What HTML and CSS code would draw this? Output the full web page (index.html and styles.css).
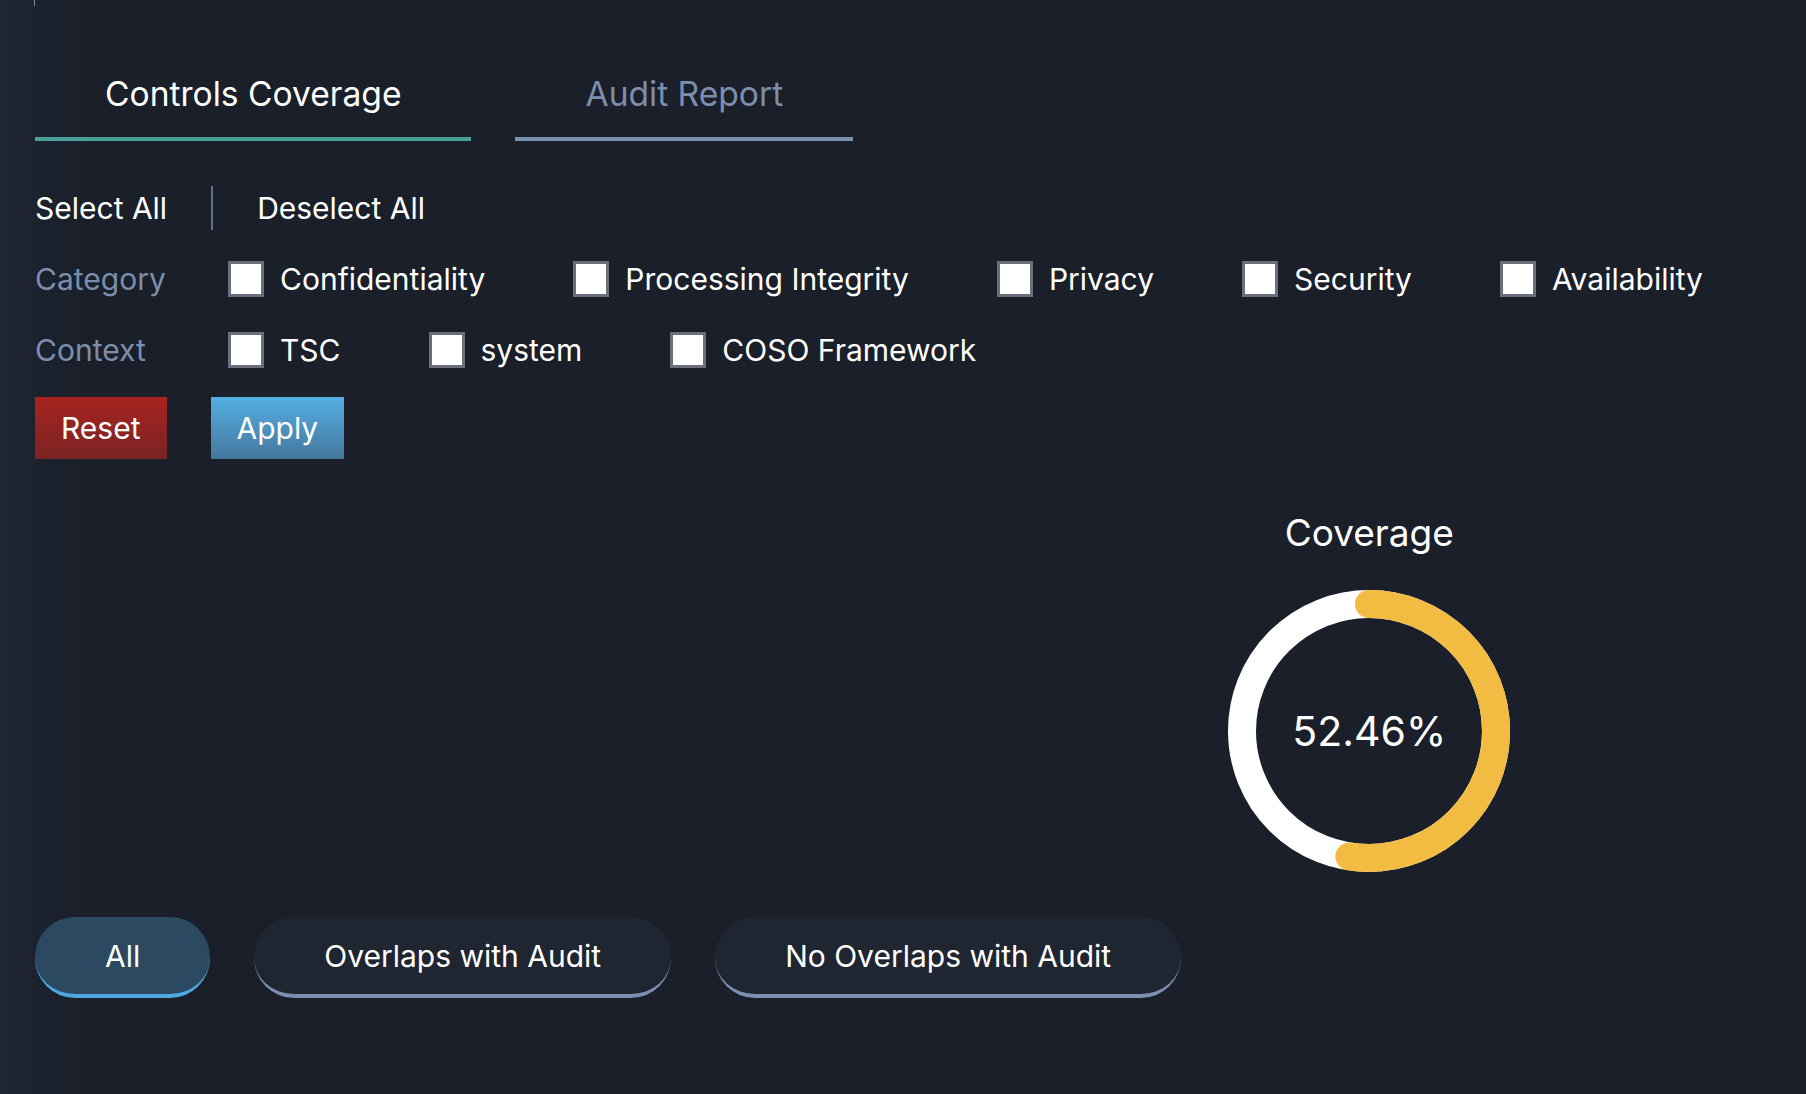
FILE: index.html
```html
<!DOCTYPE html>
<html lang="en">
<head>
<meta charset="utf-8">
<title>Controls Coverage</title>
<link rel="stylesheet" href="styles.css">
</head>
<body>
<div class="page">
  <div class="topline"></div>
  <nav class="tabs">
    <div class="tab tab-active">Controls Coverage</div>
    <div class="tab">Audit Report</div>
  </nav>

  <div class="select-row">
    <span class="link">Select All</span>
    <span class="sep"></span>
    <span class="link">Deselect All</span>
  </div>

  <div class="filter-row">
    <span class="filter-label">Category</span>
    <div class="options">
      <label class="opt"><span class="box"></span>Confidentiality</label>
      <label class="opt"><span class="box"></span>Processing Integrity</label>
      <label class="opt"><span class="box"></span>Privacy</label>
      <label class="opt"><span class="box"></span>Security</label>
      <label class="opt"><span class="box"></span>Availability</label>
    </div>
  </div>

  <div class="filter-row">
    <span class="filter-label">Context</span>
    <div class="options">
      <label class="opt"><span class="box"></span>TSC</label>
      <label class="opt"><span class="box"></span>system</label>
      <label class="opt"><span class="box"></span>COSO Framework</label>
    </div>
  </div>

  <div class="actions">
    <button class="btn btn-reset">Reset</button>
    <button class="btn btn-apply">Apply</button>
  </div>

  <div class="main">
    <div class="left-col"></div>
    <div class="chart-col">
      <div class="chart-title">Coverage</div>
      <div class="donut">
        <svg width="282" height="282" viewBox="0 0 282 282">
          <circle cx="141" cy="141" r="127" fill="none" stroke="#ffffff" stroke-width="28"/>
          <circle cx="141" cy="141" r="127" fill="none" stroke="#f2bc42" stroke-width="28" stroke-linecap="round" stroke-dasharray="418.6 797.96" transform="rotate(-90 141 141)"/>
        </svg>
        <div class="donut-value">52.46%</div>
      </div>
    </div>
  </div>

  <div class="pills">
    <button class="pill pill-active">All</button>
    <button class="pill">Overlaps with Audit</button>
    <button class="pill">No Overlaps with Audit</button>
  </div>
</div>
</body>
</html>
```

FILE: styles.css
```css
html, body {
  margin: 0;
  padding: 0;
}

body {
  background: linear-gradient(to right, #1f2733 0px, #1c222d 40px, #1a1f2a 90px);
  min-height: 1094px;
  font-family: Inter, "Noto Sans", "Liberation Sans", sans-serif;
  color: #ffffff;
}

.page {
  padding-left: 35px;
}

.topline {
  height: 6px;
  margin-left: -1px;
  border-left: 1px solid #7b8fad;
}

.tabs {
  display: flex;
  gap: 44px;
}

.tab {
  padding: 68px 70px 23px;
  font-size: 33.6px;
  line-height: 40px;
  color: #7b8fad;
  border-bottom: 4px solid #7b8fb0;
  white-space: nowrap;
}

.tab-active {
  color: #ffffff;
  border-bottom-color: #4a9f9a;
}

.select-row {
  display: flex;
  align-items: center;
  height: 44px;
  margin-top: 45px;
  font-size: 30px;
}

.sep {
  width: 2px;
  height: 44px;
  background: #5c7090;
  margin: 0 44px;
}

.filter-row {
  display: flex;
  align-items: center;
  height: 44px;
  margin-top: 27px;
  font-size: 30px;
}

.filter-label {
  width: 193px;
  flex: none;
  color: #7b8fad;
}

.options {
  display: flex;
  align-items: center;
  gap: 88px;
}

.opt {
  display: flex;
  align-items: center;
  white-space: nowrap;
}

.box {
  width: 30px;
  height: 30px;
  background: #ffffff;
  border: 3px solid #6a6f7b;
  margin-right: 16px;
  flex: none;
}

.actions {
  display: flex;
  gap: 44px;
  margin-top: 25px;
}

.btn {
  height: 62px;
  padding: 0 26px;
  border: none;
  font-family: inherit;
  font-size: 30px;
  color: #ffffff;
}

.btn-reset {
  background: linear-gradient(to bottom, #a8231f, #7a2424);
}

.btn-apply {
  background: linear-gradient(to bottom, #56aee3, #44779c);
}

.main {
  display: grid;
  grid-template-columns: 1fr 1fr;
  column-gap: 24px;
  margin-top: 50px;
}

.chart-col {
  display: flex;
  flex-direction: column;
  align-items: center;
}

.chart-title {
  font-size: 37px;
  line-height: 48px;
}

.donut {
  position: relative;
  width: 282px;
  height: 282px;
  margin-top: 33px;
}

.donut svg {
  display: block;
}

.donut-value {
  position: absolute;
  inset: 0;
  display: flex;
  align-items: center;
  justify-content: center;
  font-size: 41px;
}

.pills {
  display: flex;
  gap: 44px;
  margin-top: 45px;
}

.pill {
  height: 81px;
  padding: 0 70px;
  border: none;
  border-bottom: 4px solid #7b8fb0;
  border-radius: 40px;
  background: #1f2531;
  font-family: inherit;
  font-size: 30px;
  color: #ffffff;
  white-space: nowrap;
}

.pill-active {
  background: #2b4a62;
  border-bottom-color: #4ea8e2;
}
```
